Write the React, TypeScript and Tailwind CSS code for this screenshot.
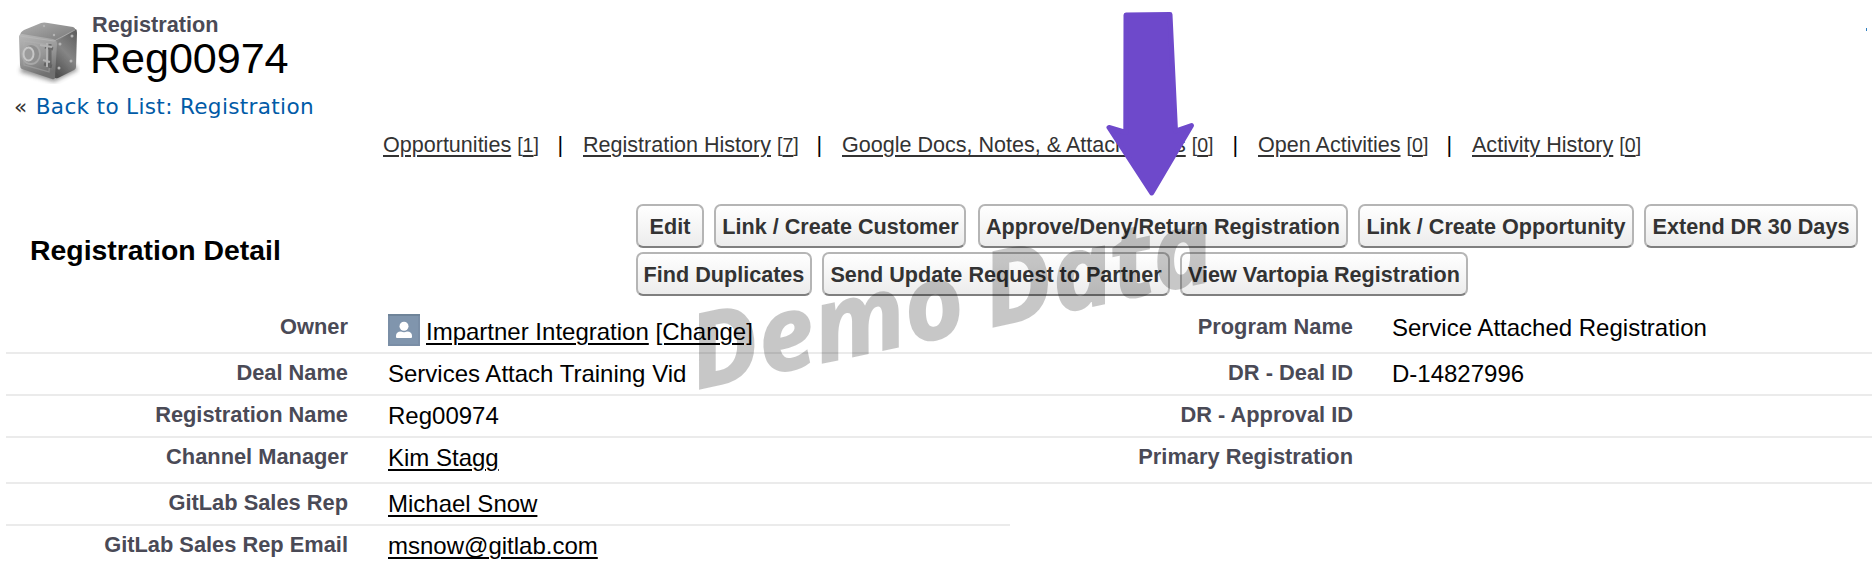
import React from "react";

type Field = { label: string; value?: React.ReactNode };

const link = "underline decoration-2 underline-offset-[3px]";

const related = [
  { name: "Opportunities", count: 1, width: "w-[200px]" },
  { name: "Registration History", count: 7, width: "w-[259px]" },
  { name: "Google Docs, Notes, & Attachments", count: 0, width: "w-[416px]" },
  { name: "Open Activities", count: 0, width: "w-[214px]" },
  { name: "Activity History", count: 0, width: "w-[180px]" },
];

const actionRows = [
  [
    { text: "Edit", cls: "w-[68px]" },
    { text: "Link / Create Customer", cls: "w-[252px] ml-[10px] indent-px" },
    { text: "Approve/Deny/Return Registration", cls: "w-[370px] ml-[12px]" },
    { text: "Link / Create Opportunity", cls: "w-[276px] ml-[10px]" },
    { text: "Extend DR 30 Days", cls: "w-[214px] ml-[10px]" },
  ],
  [
    { text: "Find Duplicates", cls: "w-[176px]" },
    { text: "Send Update Request to Partner", cls: "w-[348px] ml-[10px]" },
    { text: "View Vartopia Registration", cls: "w-[288px] ml-[10px]" },
  ],
];

function SafeIcon() {
  return (
    <svg className="block h-[66px] w-[64px]" viewBox="0 0 64 66">
      <defs>
        <linearGradient id="top" x1="0" y1="0" x2="1" y2="1">
          <stop offset="0" stopColor="#b0b0b0" />
          <stop offset="1" stopColor="#777" />
        </linearGradient>
        <linearGradient id="front" x1="0" y1="0" x2="0.3" y2="1">
          <stop offset="0" stopColor="#b8b8b8" />
          <stop offset="0.6" stopColor="#959595" />
          <stop offset="1" stopColor="#707070" />
        </linearGradient>
        <linearGradient id="side" x1="0.8" y1="0" x2="0.3" y2="1">
          <stop offset="0" stopColor="#606060" />
          <stop offset="0.5" stopColor="#858585" />
          <stop offset="1" stopColor="#505050" />
        </linearGradient>
        <filter id="shadow" x="-20%" y="-20%" width="140%" height="140%">
          <feGaussianBlur stdDeviation="2" />
        </filter>
        <filter id="soft">
          <feGaussianBlur stdDeviation="0.6" />
        </filter>
      </defs>
      <path d="M4 54L38 64L62 52L58 46L6 48Z" fill="#555" opacity="0.6" filter="url(#shadow)" />
      <g filter="url(#soft)">
        <path d="M4 18Q4 14 8 12L25 5Q28 4 32 5L57 9Q60 10 59 13L41 24L5 19Z" fill="url(#top)" />
        <path d="M60 11Q61 12 61 15L60 49Q60 51 58 52L42 60Q38 61 38 58L40 24Z" fill="url(#side)" />
        <path d="M3 19Q3 16 6 16L37 21Q41 22 41 26L39 59Q39 62 36 61L6 51Q4 50 4 47Z" fill="url(#front)" />
        <path d="M4 18L38 23L59 12" fill="none" stroke="#bdbdbd" strokeWidth="1" opacity="0.6" />
        <path d="M8 23L35 27L33 54L8 47Z" fill="none" stroke="#b5b5b5" strokeWidth="1.3" opacity="0.4" />
        <ellipse cx="15" cy="36" rx="9" ry="10" fill="#8f8f8f" stroke="#a8a8a8" strokeWidth="1.800" />
        <ellipse cx="12.500" cy="36" rx="5" ry="6.500" fill="#9c9c9c" stroke="#c6c6c6" strokeWidth="2" />
        <path d="M34 26V50M29 29L37 31M28 46L36 48" fill="none" stroke="#555" strokeWidth="3" opacity="0.7" />
        <path d="M31 25V49M24 27L36 29M27 42L34 44" fill="none" stroke="#b2b2b2" strokeWidth="2" />
        <g fill="#b5b5b5">
          <circle cx="44" cy="26" r="1.500" />
          <circle cx="56" cy="18" r="1.500" />
          <circle cx="43" cy="50" r="1.500" />
          <circle cx="55" cy="43" r="1.500" />
          <circle cx="28" cy="8" r="1.200" />
          <circle cx="38" cy="17" r="1.200" />
        </g>
      </g>
    </svg>
  );
}

function UserIcon() {
  return (
    <svg className="block h-8 w-8 shrink-0" viewBox="0 0 32 32">
      <rect width="32" height="32" fill="#8095ad" />
      <path d="M0 0H32V2H0Z" fill="#6f8499" />
      <path d="M1 2V31H31V2" fill="none" stroke="#768ba2" strokeWidth="2" opacity="0.6" />
      <circle cx="16" cy="12.300" r="4.500" fill="#fff" />
      <path d="M8 22Q8 17.500 13 17.500Q16 19 19 17.500Q24 17.500 24 22V23Q24 24 23 24H9Q8 24 8 23Z" fill="#fff" />
    </svg>
  );
}

const left: Field[] = [
  {
    label: "Owner",
    value: (
      <div className="flex">
        <UserIcon />
        <span className="ml-[6px] pt-[4px]">
          <a className={link}>Impartner Integration</a> <a className={link}>[Change]</a>
        </span>
      </div>
    ),
  },
  { label: "Deal Name", value: "Services Attach Training Vid" },
  { label: "Registration Name", value: "Reg00974" },
  { label: "Channel Manager", value: <a className={link}>Kim Stagg</a> },
  { label: "GitLab Sales Rep", value: <a className={link}>Michael Snow</a> },
  { label: "GitLab Sales Rep Email", value: <a className={link}>msnow@gitlab.com</a> },
];

const right: Field[] = [
  { label: "Program Name", value: "Service Attached Registration" },
  { label: "DR - Deal ID", value: "D-14827996" },
  { label: "DR - Approval ID" },
  { label: "Primary Registration" },
];

const heights = ["h-[46px]", "h-[42px]", "h-[42px]", "h-[46px]", "h-[42px]", "h-[48px]"];

function Column({ fields, labelWidth, gap }: { fields: Field[]; labelWidth: string; gap: string }) {
  return (
    <>
      {fields.map((f, i) => (
        <div key={f.label} className={`flex ${heights[i]} ${i < 5 ? "border-b-2 border-[#ebebeb]" : ""}`}>
          <div className={`${labelWidth} pt-[5px] text-right text-[21.84px] leading-7 font-bold text-[#4a4a56]`}>
            {f.label}
          </div>
          <div className={`${gap} pt-[6px] text-[24px] leading-7 text-black`}>{f.value}</div>
        </div>
      ))}
    </>
  );
}

export default function App() {
  return (
    <div className="relative h-[574px] w-[1872px] overflow-hidden bg-white font-['Liberation_Sans',Arial,sans-serif] whitespace-nowrap">
      <header className="flex h-[90px] pt-[18px] pl-[16px]">
        <SafeIcon />
        <div className="pl-[12px]">
          <div className="h-[18px] text-[21.7px] leading-[14px] font-bold text-[#4a4a56]">Registration</div>
          <h1 className="-ml-[2px] text-[43.2px] leading-[44px] tracking-[-0.1px] text-black">Reg00974</h1>
        </div>
      </header>
      <div className="h-[40px] pt-[3px] pl-[14px] font-['DejaVu_Sans',Verdana,sans-serif] text-[21.6px] leading-7 tracking-[0.32px] text-[#333]">
        « <a className="ml-[1px] text-[#015ba7]">Back to List: Registration</a>
      </div>
      <nav className="flex h-[74px] pt-[1px] pl-[383px] text-[21.55px] leading-7 text-[#333]">
        {related.map((r, i) => (
          <div key={r.name} className={`flex items-baseline ${r.width}`}>
            <a className={link}>{r.name}</a>
            <a className={`ml-[6px] text-[19.6px] ${link}`}>[{r.count}]</a>
            {i < related.length - 1 && <span className="mr-[20px] ml-auto text-black">|</span>}
          </div>
        ))}
      </nav>
      <section className="flex h-[104px]">
        <h2 className="w-[636px] pt-[30px] pl-[30px] text-[28.4px] leading-8 font-bold text-black">
          Registration Detail
        </h2>
        <div className="flex flex-col gap-1">
          {actionRows.map((row, i) => (
            <div key={i} className="flex">
              {row.map((b) => (
                <button
                  key={b.text}
                  className={`h-[44px] rounded-[7px] border-2 border-[#b5b5b5] border-b-[#7f7f7f] bg-linear-to-b from-white to-[#ececec] pt-[2px] text-[21.6px] leading-[38px] font-bold text-[#333] ${b.cls}`}
                >
                  {b.text}
                </button>
              ))}
            </div>
          ))}
        </div>
      </section>
      <section className="flex pl-[6px]">
        <div className="w-[1004px]">
          <Column fields={left} labelWidth="w-[342px]" gap="ml-[40px]" />
        </div>
        <div className="flex-1">
          <Column fields={right} labelWidth="w-[343px]" gap="ml-[39px]" />
        </div>
      </section>
      <div className="pointer-events-none absolute top-[286px] left-[697px] origin-[0_100px] scale-x-[0.99] -rotate-[11.900deg] font-['Open_Sans',sans-serif] text-[102px] leading-[128px] font-bold tracking-[0.7px] text-black italic opacity-[0.215] [-webkit-text-stroke:2px_black] [word-spacing:-5px]">
        Demo Data
      </div>
      <svg className="pointer-events-none absolute top-0 left-[1090px] h-[210px] w-[130px]" viewBox="0 0 130 210">
        <path
          d="M36 15L80 14.500L85.500 131L101.500 125.500L61.700 193L19 127.500L35.800 132.500Z"
          fill="#6e49cb"
          stroke="#6e49cb"
          strokeWidth="5"
          strokeLinejoin="round"
        />
      </svg>
      <span className="absolute top-[28px] left-[1866px] h-[3px] w-px bg-[#2f7fc0]" />
    </div>
  );
}
